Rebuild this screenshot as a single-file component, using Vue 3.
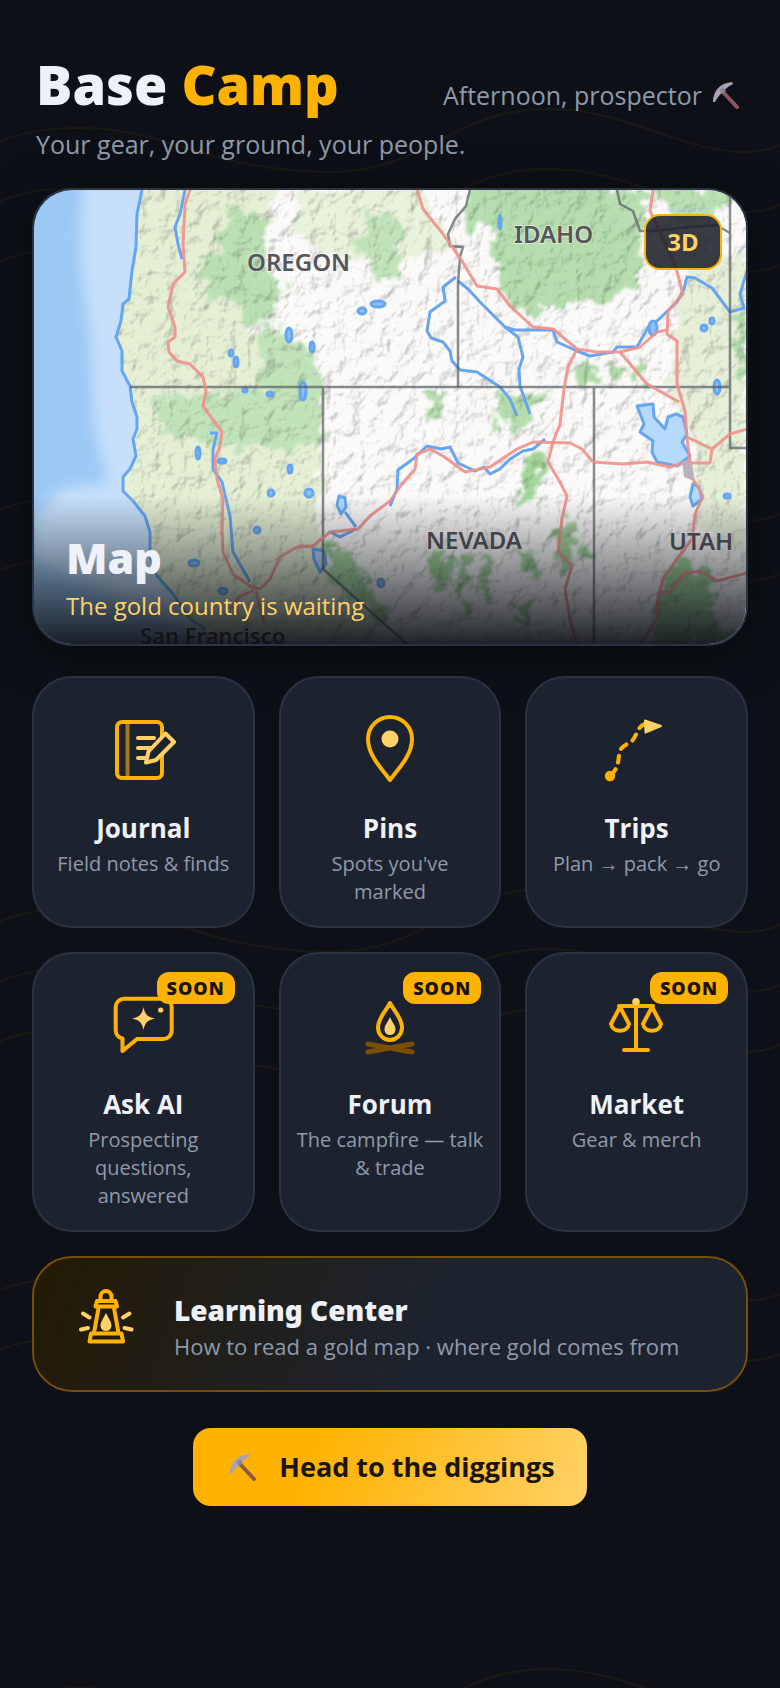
<template>
  <main class="page">
    <header class="header">
      <div class="title-row">
        <h1>Base <span class="accent">Camp</span></h1>
        <p class="greeting">
          Afternoon, prospector
          <svg class="pick" viewBox="0 0 28 28" aria-hidden="true">
            <path d="M11 11 L25 26" stroke="#8d5560" stroke-width="4" stroke-linecap="round" />
            <path d="M1 21 C1 10 8 2 20 1 L21 3 C15 6 8 12 3 21 Z" fill="#a9a2b8" />
            <path d="M7 9 L11 6 L14 10 L10 13 Z" fill="#8b8598" />
          </svg>
        </p>
      </div>
      <p class="tagline">Your gear, your ground, your people.</p>
    </header>

    <a class="map-card" href="#map" aria-label="Map, the gold country is waiting">
      <svg class="map" viewBox="34 191 712 454" preserveAspectRatio="xMidYMid slice" aria-hidden="true">
        <defs>
          <filter id="relief" x="0" y="0" width="100%" height="100%" color-interpolation-filters="sRGB">
            <feTurbulence type="fractalNoise" baseFrequency="0.07 0.06" numOctaves="3" seed="11" />
            <feColorMatrix values="0 0 0 0 0  0 0 0 0 0  0 0 0 0 0  1 0 0 0 0" />
            <feGaussianBlur stdDeviation="0.7" />
            <feDiffuseLighting surfaceScale="4" diffuseConstant="1.2" lighting-color="#ffffff">
              <feDistantLight azimuth="225" elevation="60" />
            </feDiffuseLighting>
          </filter>
          <filter id="rough" x="-10%" y="-10%" width="120%" height="120%">
            <feTurbulence type="fractalNoise" baseFrequency="0.07" numOctaves="3" seed="4" />
            <feDisplacementMap in="SourceGraphic" scale="30" xChannelSelector="R" yChannelSelector="G" />
            <feGaussianBlur stdDeviation="1.5" />
          </filter>
          <filter id="soft" x="-20%" y="-20%" width="140%" height="140%">
            <feGaussianBlur stdDeviation="7" />
          </filter>
          <clipPath id="land">
            <path :d="coast + ' L746 645 L746 191 Z'" />
          </clipPath>
        </defs>

        <rect x="34" y="191" width="712" height="454" fill="#9cc8f4" />
        <path d="M82 180 L80 260 L90 340 L94 430 L108 484 L60 490 L34 520 L34 560 L100 590 L240 660 L240 180 Z" fill="#c6e0fb" filter="url(#soft)" />

        <g clip-path="url(#land)">
          <rect x="34" y="191" width="712" height="454" fill="#fbfaf9" />
          <g filter="url(#rough)">
            <path d="M100 170 H285 L262 240 L250 330 L300 380 L322 430 L320 560 L390 650 H100 Z" fill="#e4efd4" />
            <path d="M300 190 H420 L455 250 L400 262 L340 260 L290 235 Z" fill="#e9f2dc" />
            <path d="M690 270 L746 250 V560 L700 530 L695 430 L670 400 L675 320 Z" fill="#e6efd8" />
            <path d="M228 210 L262 215 L262 272 L288 290 L270 320 L250 325 L232 300 L205 300 L200 262 L214 255 Z" fill="#b9dfb2" />
            <path d="M258 325 L285 330 L318 360 L324 440 L300 450 L225 450 L160 430 L155 395 L210 395 L262 390 Z" fill="#c1e3ba" />
            <path d="M345 240 L362 230 L366 215 L384 210 L402 225 L398 280 L372 276 L368 258 L350 252 Z" fill="#c1e3ba" />
            <path d="M473 185 H600 L640 232 L640 285 L618 290 L610 303 L560 306 L530 318 L502 298 L498 262 L490 225 L460 235 Z" fill="#b5ddae" />
            <path d="M595 190 H645 V235 L620 215 Z M650 190 H735 V205 L680 225 Z" fill="#b9dfb2" />
            <path d="M576 365 L598 368 L598 386 L578 386 Z M612 365 L622 368 L620 382 L610 380 Z M636 358 L646 365 L646 385 L634 385 Z" fill="#b0dba8" />
            <path d="M497 392 H552 L535 410 L517 435 L500 432 Z M428 393 L446 400 L440 420 L424 424 Z" fill="#b5ddae" />
            <path d="M540 447 L548 452 L534 500 L518 508 L522 470 Z" fill="#a3d59b" />
            <path d="M568 515 L574 530 L572 570 L550 560 L558 540 Z M585 545 L594 548 L592 562 L582 558 Z" fill="#a3d59b" />
            <path d="M430 555 L452 556 L448 600 L432 590 Z M462 552 L474 555 L462 600 L456 592 Z M482 555 L494 560 L492 600 L478 598 Z M524 550 L536 560 L540 582 L528 578 Z M466 600 L474 605 L468 626 L460 618 Z M520 605 L534 600 L526 626 L514 625 Z" fill="#a3d59b" />
            <path d="M326 538 L340 550 L372 585 L390 610 L378 625 L330 580 Z" fill="#a9d8a0" />
            <path d="M660 580 L682 560 L700 570 L712 580 L716 620 L736 645 H650 Z" fill="#a3d59b" />
            <path d="M733 315 L746 310 V390 L735 370 Z" fill="#b0dba8" />
          </g>
          <rect class="relief" x="34" y="191" width="712" height="454" filter="url(#relief)" />
        </g>

        <g class="water">
          <path :d="coast" />
          <path v-for="(river, i) in rivers" :key="i" :d="river" />
          <path class="lake" d="M637 407 L653 405 L654 418 L665 430 L668 418 L676 415 L683 418 L687 435 L682 443 L690 457 L677 467 L657 463 L652 453 L653 442 L640 433 L644 425 Z" />
          <path class="lake" d="M693 485 L699 488 L702 500 L693 507 L690 498 Z M339 497 L345 499 L346 508 L341 515 L337 506 Z M313 550 L324 552 L326 565 L320 573 L314 560 Z" />
          <ellipse v-for="(l, i) in lakes" :key="i" class="pond" :cx="l[0]" :cy="l[1]" :rx="l[2]" :ry="l[3]" />
        </g>

        <g class="borders">
          <path d="M130 388 H730 M323 388 V570 L409 647 M594 388 V647 M730 191 V449 H747" />
          <path d="M458 388 V284 L460 258 L463 248 L450 247 L448 235 L455 220 L466 207 L470 191" />
          <path d="M617 191 L620 205 L633 212 L640 232 L655 232 L690 228 L716 226 L730 234" />
        </g>

        <g class="roads">
          <path v-for="(road, i) in roads" :key="i" :d="road" />
        </g>

        <path d="M682 462 L692 464 L694 482 L684 478 Z" fill="#b9b2bd" />
        <g class="labels">
          <text x="247" y="272">OREGON</text>
          <text x="514" y="244">IDAHO</text>
          <text x="426" y="550">NEVADA</text>
          <text x="669" y="551">UTAH</text>
          <text class="city" x="140" y="645">San Francisco</text>
        </g>
      </svg>
      <span class="mode">3D</span>
      <div class="map-caption">
        <h2>Map</h2>
        <p>The gold country is waiting</p>
      </div>
    </a>

    <nav class="tiles" aria-label="Sections">
      <a v-for="tile in tiles" :key="tile.id" class="tile" :href="'#' + tile.id">
        <svg class="icon" viewBox="0 0 72 72" aria-hidden="true">
          <g v-if="tile.id === 'journal'">
            <path class="line" d="M20.5 10 V66" opacity="0.6" />
            <rect class="line" x="10" y="10" width="45" height="56" rx="5" />
            <path class="line light" d="M31 26 H47 M31 36 H44 M31 46 H38" />
            <path class="line light filled" d="M58.5 21.5 L67 30 L49 48 L39 50.5 L41.5 39.5 Z" />
          </g>
          <g v-else-if="tile.id === 'pins'">
            <path class="line" d="M36 68 C29 58 14 44 14 27 A22 22 0 0 1 58 27 C58 44 43 58 36 68 Z" />
            <circle class="glow" cx="36" cy="27" r="8.5" />
          </g>
          <g v-else-if="tile.id === 'trips'">
            <path class="line" d="M44 12 C36 14 36 25 30 30 C24 33 18 36 18 43 C17 52 17 56 9 64" stroke-dasharray="7 7.2" />
            <circle class="solid" cx="9" cy="64" r="5.2" />
            <path class="glow tip" d="M44 8.5 L60 14 L44.5 20.5 Z" />
          </g>
          <g v-else-if="tile.id === 'ask-ai'">
            <path class="line" d="M17 10.7 H56 A8.5 8.5 0 0 1 64.7 19 V42.5 A8.5 8.5 0 0 1 56 51 H30 L15.5 63 V50.5 A8.5 8.5 0 0 1 8.7 42.5 V19 A8.5 8.5 0 0 1 17 10.7 Z" />
            <path class="glow" d="M36.5 19 C38 26 40 29 48 30.5 C40 32 38 35 36.5 42 C35 35 33 32 25 30.5 C33 29 35 26 36.5 19 Z" />
            <circle class="glow" cx="53.7" cy="22" r="2.6" />
          </g>
          <g v-else-if="tile.id === 'forum'">
            <path class="line" d="M36 15 C40 23 48 30 48 39.5 A12 12.5 0 0 1 24 39.5 C24 30 32 23 36 15 Z" />
            <path class="glow" d="M36 29 C38 34 41.5 37 41.5 41.5 A5.5 5.5 0 0 1 30.5 41.5 C30.5 37 34 34 36 29 Z" />
            <path class="logs" d="M14 56 L58 64 M14 64 L58 56" />
          </g>
          <g v-else>
            <path class="line" d="M18 18 H52 M35 18 V62 M23 62 H47" />
            <path class="line" d="M19 19 L10 36 C11.5 45 26.5 45 28 36 Z M51 19 L42 36 C43.5 45 58.5 45 60 36 Z" />
            <circle class="glow" cx="35" cy="13.7" r="3.8" />
          </g>
        </svg>
        <h3>{{ tile.title }}</h3>
        <p>{{ tile.text }}</p>
        <span v-if="tile.soon" class="soon">SOON</span>
      </a>
    </nav>

    <a class="learn" href="#learning">
      <svg class="icon" viewBox="0 0 72 72" aria-hidden="true">
        <path class="line" d="M30.5 11 V8.5 A5.5 5.5 0 0 1 41.5 8.5 V11 M27 13 H45.5 L47 18.5 H25.5 Z M28.5 20 L24 45 M44 20 L48.5 45 M21 45.5 H51.5 L53 53.5 H19.5 Z" />
        <path class="glow" d="M36 25 C39 31 41.5 34 41.5 37.5 A5.5 5.5 0 0 1 30.5 37.5 C30.5 34 33 31 36 25 Z" />
        <path class="line light" d="M13 25.5 L19.5 29.5 M11 41.5 L18 40 M59.5 25.5 L53 29.5 M61.5 41.5 L54.5 40" />
      </svg>
      <div class="learn-text">
        <h2>Learning Center</h2>
        <p>How to read a gold map · where gold comes from</p>
      </div>
    </a>

    <button type="button" class="cta">
      <svg class="pick" viewBox="0 0 28 28" aria-hidden="true">
        <path d="M11 11 L25 26" stroke="#8a5a44" stroke-width="4" stroke-linecap="round" />
        <path d="M1 21 C1 10 8 2 20 1 L21 3 C15 6 8 12 3 21 Z" fill="#a9a2b8" />
        <path d="M7 9 L11 6 L14 10 L10 13 Z" fill="#8b8598" />
      </svg>
      Head to the diggings
    </button>
  </main>
</template>

<script setup>
const tiles = [
  { id: 'journal', title: 'Journal', text: 'Field notes & finds' },
  { id: 'pins', title: 'Pins', text: "Spots you've marked" },
  { id: 'trips', title: 'Trips', text: 'Plan → pack → go' },
  { id: 'ask-ai', title: 'Ask AI', text: 'Prospecting questions, answered', soon: true },
  { id: 'forum', title: 'Forum', text: 'The campfire — talk & trade', soon: true },
  { id: 'market', title: 'Market', text: 'Gear & merch', soon: true }
]

const coast = 'M142 191 L137 215 L136 248 L132 272 L129 300 L123 305 L121 322 L116 338 L122 352 L122 372 L130 387 L132 403 L137 418 L137 430 L133 440 L136 457 L130 470 L123 478 L123 492 L133 502 L145 517 L150 533 L150 557 L157 577 L173 595 L190 620 L203 628 L210 647'

const rivers = [
  'M185 191 L180 215 L175 228 L178 245 L182 260',
  'M456 278 L443 288 L445 302 L430 313 L427 332 L431 339 L443 343 L450 352 L452 362 L460 371 L477 373 L500 388 L510 400 L517 417',
  'M458 282 L468 290 L480 303 L488 311 L505 328 L515 331 L553 331 L557 343 L577 352 L590 357 L613 353 L617 348 L637 348 L650 325 L657 322 L677 303 L684 290 L687 278 L695 279 L712 289 L730 313 L744 309 L740 295 L747 272',
  'M505 328 L518 338 L523 358 L519 370 L520 387 L530 415',
  'M390 507 L397 490 L398 471 L413 460 L427 447 L441 450 L450 448 L458 464 L475 472 L484 468 L490 475 L500 470 L510 460 L523 452 L533 450 L545 440',
  'M210 434 L217 434 L213 450 L213 470 L222 483 L230 517 L233 553 L250 583',
  'M345 513 L356 528 M330 533 L340 538 L356 530'
]

// cx, cy, rx, ry
const lakes = [
  [362, 312, 4, 3], [378, 305, 7, 3], [289, 336, 3, 7], [312, 348, 2, 5],
  [231, 354, 2, 3], [236, 363, 2, 5], [303, 392, 3, 9], [270, 395, 3, 2],
  [245, 391, 2, 2], [198, 454, 2, 6], [222, 462, 4, 2], [290, 470, 2, 4],
  [271, 494, 3, 3], [309, 494, 4, 4], [257, 531, 3, 3], [194, 564, 5, 3],
  [381, 584, 3, 4], [223, 592, 4, 3], [500, 223, 1, 7], [653, 329, 4, 7],
  [704, 329, 3, 3], [712, 322, 2, 3], [717, 388, 3, 7], [727, 497, 3, 2]
]

const roads = [
  'M190 191 L185 205 L183 245 L185 273 L173 285 L168 308 L175 328 L175 338 L168 343 L169 353 L177 362 L190 365 L203 378 L206 392 L203 407 L222 433 L220 447 L215 460 L217 480 L223 500 L222 530 L223 553 L233 575 L250 587 L260 590 L270 580 L280 558 L297 548 L313 547 L330 533 L358 530 L370 517 L390 502 L402 485 L415 470 L417 455 L430 450 L443 457 L465 473 L490 468 L517 450 L533 443 L570 444 L582 450 L593 463 L623 465 L647 463 L670 468 L690 462',
  'M253 592 L240 597 L230 610 M256 592 L264 625',
  'M687 440 L690 462 L693 480 L703 497 L695 515 L692 540 L677 560 L663 580 L658 600 L657 620 L640 646',
  'M658 593 L670 593 L683 575 L700 572 L717 582 L747 574',
  'M690 464 L710 464 L712 450 L730 435 L747 430 M687 438 L712 450',
  'M577 350 L568 368 L564 390 L560 425 L553 443 L548 463 L560 483 L567 497 L562 520 L558 553 L572 567 L565 590 L570 620 L577 646',
  'M417 191 L423 210 L443 235 L462 262 L477 287 L497 290 L510 307 L533 328 L553 330 L577 350 L597 353 L620 353 L640 348 L657 333 L667 331',
  'M653 191 L650 212 L675 265 L683 295 L668 312 L667 335 L677 342 L677 385 L685 412 L687 440',
  'M620 353 L647 385 L679 403'
]
</script>

<style>
body {
  margin: 0;
  background: #0d1117;
}
</style>

<style scoped>
.page {
  min-height: 100vh;
  box-sizing: border-box;
  padding: 48px 32px;
  font-family: "Open Sans", "Noto Sans", sans-serif;
  color: #eef1f8;
  background-color: #0d1117;
  background-image: url("data:image/svg+xml,%3Csvg xmlns='http://www.w3.org/2000/svg' xmlns:xlink='http://www.w3.org/1999/xlink' width='780' height='780'%3E%3Cg fill='none' stroke='%23ffb300' stroke-opacity='.05' stroke-width='2'%3E%3Cpath id='w' d='M0 141C40 125 100 124 150 137C210 156 260 172 328 172C430 172 450 109 547 109C630 109 680 152 746 152C760 152 770 149 780 145'/%3E%3Cuse xlink:href='%23w' y='60'/%3E%3Cuse xlink:href='%23w' y='120'/%3E%3Cuse xlink:href='%23w' y='369'/%3E%3Cuse xlink:href='%23w' y='429'/%3E%3C/g%3E%3C/svg%3E");
}

h1, h2, h3, p {
  margin: 0;
}

a {
  color: inherit;
  text-decoration: none;
}

.header {
  padding: 0 8px 0 4px;
  margin-bottom: 24px;
}

.title-row {
  display: flex;
  justify-content: space-between;
  align-items: baseline;
}

h1 {
  font-family: "Noto Sans", sans-serif;
  font-size: 54px;
  line-height: 72px;
  font-weight: 900;
}

.accent {
  color: #ffb300;
}

.greeting, .tagline {
  font-size: 25px;
  line-height: 40px;
  color: #8f9aaa;
}

.greeting {
  display: flex;
  align-items: center;
  gap: 10px;
}

.tagline {
  margin-top: 4px;
}

.pick {
  width: 28px;
  height: 28px;
  fill: none;
}

.map-card {
  display: block;
  position: relative;
  box-sizing: border-box;
  aspect-ratio: 716 / 458;
  border: 2px solid #2b3342;
  border-radius: 40px;
  overflow: hidden;
  box-shadow: 0 8px 48px rgba(0, 0, 0, 0.5);
}

.map {
  display: block;
  width: 100%;
  height: 100%;
}

.relief {
  mix-blend-mode: multiply;
  opacity: 0.4;
}

.water path, .water ellipse {
  fill: none;
  stroke: #66a6f0;
  stroke-width: 3;
  stroke-linejoin: round;
}

.water .lake {
  fill: #b5dafc;
}

.water .pond {
  fill: #8ec1f7;
}

.borders {
  fill: none;
  stroke: #555b62;
  stroke-opacity: 0.7;
  stroke-width: 2.5;
}

.roads {
  fill: none;
  stroke: #f08f8b;
  stroke-opacity: 0.9;
  stroke-width: 3;
  stroke-linejoin: round;
}

.labels {
  font-family: "Noto Sans", sans-serif;
  font-size: 24px;
  font-weight: 600;
  fill: #55555a;
  stroke: rgba(255, 255, 255, 0.5);
  stroke-width: 2;
  paint-order: stroke;
}

.labels .city {
  font-size: 22px;
  fill: #222222;
}

.mode {
  position: absolute;
  top: 24px;
  right: 24px;
  box-sizing: border-box;
  width: 78px;
  height: 56px;
  border: 2px solid #ffb300;
  border-radius: 16px;
  background: rgba(24, 28, 36, 0.86);
  color: #ffd166;
  font-size: 24px;
  line-height: 52px;
  font-weight: 700;
  text-align: center;
}

.map-caption {
  position: absolute;
  left: 0;
  right: 0;
  bottom: 0;
  padding: 36px 32px 20px;
  background: linear-gradient(to top, rgba(13, 17, 23, 0.92), rgba(13, 17, 23, 0));
}

.map-caption h2 {
  margin-bottom: 4px;
  font-family: "Noto Sans", sans-serif;
  font-size: 43px;
  line-height: 52px;
  font-weight: 900;
}

.map-caption p {
  font-size: 24px;
  line-height: 36px;
  color: #ffd166;
}

.tiles {
  display: grid;
  grid-template-columns: repeat(3, 1fr);
  gap: 24px;
  margin: 30px 0 24px;
}

.tile {
  position: relative;
  display: flex;
  flex-direction: column;
  align-items: center;
  padding: 34px 16px 20px;
  border: 2px solid #2b3242;
  border-radius: 40px;
  background: #1d232e;
  text-align: center;
}

.icon {
  flex: none;
  width: 72px;
  height: 72px;
}

.line {
  fill: none;
  stroke: #ffb300;
  stroke-width: 4;
  stroke-linecap: round;
  stroke-linejoin: round;
}

.light {
  stroke: #ffd166;
}

.filled {
  fill: #1d232e;
}

.solid {
  fill: #ffb300;
}

.glow {
  fill: #ffd166;
}

.tip {
  stroke: #ffd166;
  stroke-width: 2;
  stroke-linejoin: round;
}

.logs {
  stroke: #7a5005;
  stroke-width: 5;
  stroke-linecap: round;
}

.tile h3 {
  margin: 26px 0 4px;
  font-size: 26px;
  line-height: 36px;
  font-weight: 700;
}

.tile p {
  font-size: 20px;
  line-height: 28px;
  color: #8f9aaa;
}

.soon {
  position: absolute;
  top: 18px;
  right: 18px;
  padding: 0 10px;
  border-radius: 12px;
  background: #ffb300;
  color: #1a1508;
  font-size: 18px;
  line-height: 32px;
  font-weight: 800;
  letter-spacing: 1px;
}

.learn {
  display: flex;
  align-items: center;
  gap: 32px;
  padding: 26px 36px;
  border: 2px solid #754e0a;
  border-radius: 40px;
  background: linear-gradient(110deg, #241a04, #1d232e 55%);
}

.learn-text {
  padding-top: 8px;
}

.learn h2 {
  font-family: "Noto Sans", sans-serif;
  font-size: 28px;
  line-height: 36px;
  font-weight: 900;
}

.learn p {
  font-size: 22px;
  line-height: 36px;
  color: #8f9aaa;
}

.cta {
  display: flex;
  align-items: center;
  gap: 22px;
  margin: 36px auto 0;
  padding: 20px 32px 20px 36px;
  border: 0;
  border-radius: 18px;
  background: linear-gradient(110deg, #ffb300 30%, #ffd166);
  color: #1a1508;
  font-family: inherit;
  font-size: 27px;
  line-height: 38px;
  font-weight: 700;
  cursor: pointer;
}
</style>
